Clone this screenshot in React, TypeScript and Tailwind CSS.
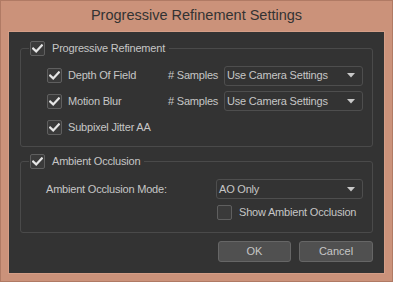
import React from "react";

const font = { fontFamily: "'Liberation Sans', Arial, sans-serif" };

function Check({ checked = true }: { checked?: boolean }) {
  return (
    <div className="w-[15px] h-[15px] shrink-0 rounded-[2px] border border-[#5f5f5f] bg-[#3a3a3a] flex items-center justify-center">
      {checked && (
        <svg width="11" height="9" viewBox="0 0 11 9">
          <path d="M1.2 4.6 L4.2 7.4 L9.8 1.4" fill="none" stroke="#e6e6e6" strokeWidth="2.2" strokeLinecap="square" />
        </svg>
      )}
    </div>
  );
}

function Select({ value, w }: { value: string; w: string }) {
  return (
    <div className={`${w} h-[20px] rounded-[3px] border border-[#4e4e4e] bg-[#333333] flex items-center pl-[2px] pr-[7px]`}>
      <span className="flex-1 text-[11px] tracking-[-0.2px] text-[#c6c6c6] leading-none">{value}</span>
      <svg width="8" height="5" viewBox="0 0 8 5">
        <path d="M0 0 H8 L4 4.5 Z" fill="#c8c8c8" />
      </svg>
    </div>
  );
}

function Legend({ label }: { label: string }) {
  return (
    <div className="flex items-center h-[15px] -mt-[8px] ml-[8px]">
      <div className="flex items-center bg-[#333333] pr-[4px] pl-[1px]">
        <Check />
        <span className="ml-[7px] text-[11px] tracking-[-0.2px] text-[#c6c6c6] leading-none">{label}</span>
      </div>
    </div>
  );
}

export default function App() {
  return (
    <div style={font} className="w-[393px] h-[282px] bg-[#cb927a] border border-[#b07a64] flex flex-col">
      <div className="h-[30px] flex items-center justify-center text-[14.5px] text-[#333333]">
        Progressive Refinement Settings
      </div>
      <div className="mx-[7px] h-[243px] bg-[#333333] border border-[#d49e87] px-[11px] flex flex-col">
        {/* Group 1 */}
        <div className="mt-[16px] h-[99px] rounded-[3px] border border-[#4a4a4a] flex flex-col">
          <Legend label="Progressive Refinement" />
          <div className="mt-[7px] flex flex-col pl-[26px]">
            <div className="h-[25px] flex items-center">
              <Check />
              <span className="ml-[6px] w-[100px] text-[11px] tracking-[-0.2px] text-[#c6c6c6] leading-none">Depth Of Field</span>
              <span className="w-[56px] text-[11px] tracking-[-0.2px] text-[#c6c6c6] leading-none"># Samples</span>
              <Select value="Use Camera Settings" w="w-[139px]" />
            </div>
            <div className="h-[26px] flex items-center">
              <Check />
              <span className="ml-[6px] w-[100px] text-[11px] tracking-[-0.2px] text-[#c6c6c6] leading-none">Motion Blur</span>
              <span className="w-[56px] text-[11px] tracking-[-0.2px] text-[#c6c6c6] leading-none"># Samples</span>
              <Select value="Use Camera Settings" w="w-[139px]" />
            </div>
            <div className="h-[26px] flex items-center">
              <Check />
              <span className="ml-[6px] text-[11px] tracking-[-0.2px] text-[#c6c6c6] leading-none">Subpixel Jitter AA</span>
            </div>
          </div>
        </div>
        {/* Group 2 */}
        <div className="mt-[14px] h-[72px] rounded-[3px] border border-[#4a4a4a] flex flex-col">
          <Legend label="Ambient Occlusion" />
          <div className="mt-[10px] flex items-center pl-[25px]">
            <span className="w-[170px] text-[11px] tracking-[-0.2px] text-[#c6c6c6] leading-none">Ambient Occlusion Mode:</span>
            <Select value="AO Only" w="w-[147px]" />
          </div>
          <div className="mt-[6px] flex items-center pl-[196px]">
            <Check checked={false} />
            <span className="ml-[7px] text-[11px] tracking-[-0.2px] text-[#c6c6c6] leading-none">Show Ambient Occlusion</span>
          </div>
        </div>
        {/* Buttons */}
        <div className="mt-[8px] flex justify-end gap-[8px]">
          <button className="w-[73px] h-[21px] rounded-[3px] border border-[#666666] bg-[#505050] text-[11px] text-[#c6c6c6] leading-none">OK</button>
          <button className="w-[74px] h-[21px] rounded-[3px] border border-[#666666] bg-[#505050] text-[11px] text-[#c6c6c6] leading-none">Cancel</button>
        </div>
      </div>
    </div>
  );
}
